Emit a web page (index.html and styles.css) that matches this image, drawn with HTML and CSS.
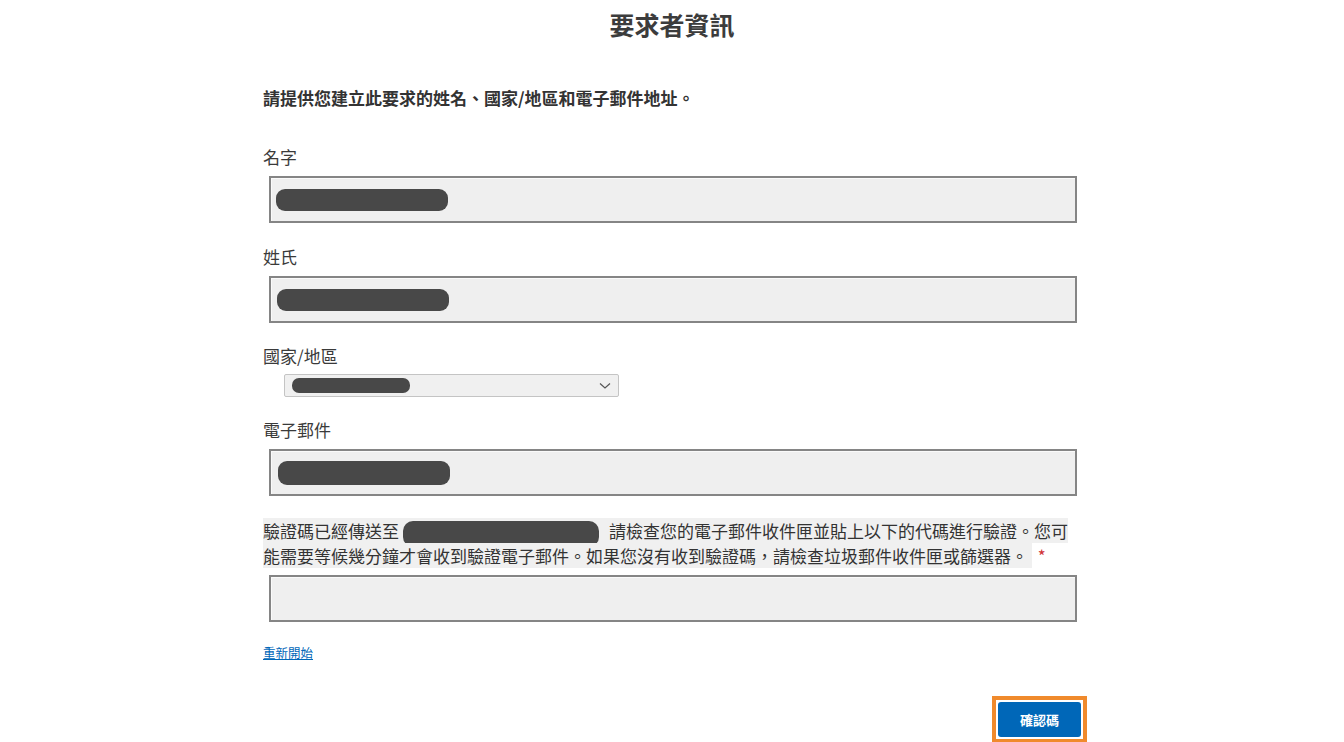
FILE: index.html
```html
<!DOCTYPE html>
<html lang="zh-Hant">
<head>
<meta charset="utf-8">
<title>要求者資訊</title>
<link rel="stylesheet" href="styles.css">
</head>
<body>
<main class="page">
  <h1 class="title">要求者資訊</h1>
  <p class="intro">請提供您建立此要求的姓名、國家/地區和電子郵件地址。</p>

  <div class="field">
    <div class="label">名字</div>
    <div class="textbox"><span class="redact redact-a"></span></div>
  </div>

  <div class="field">
    <div class="label">姓氏</div>
    <div class="textbox"><span class="redact redact-b"></span></div>
  </div>

  <div class="field field-select">
    <div class="label">國家/地區</div>
    <div class="select">
      <span class="redact redact-sel"></span>
      <svg class="chev" width="12" height="8" viewBox="0 0 12 8"><path d="M1 1.5 L6 6 L11 1.5" fill="none" stroke="#555" stroke-width="1.2"/></svg>
    </div>
  </div>

  <div class="field">
    <div class="label">電子郵件</div>
    <div class="textbox"><span class="redact redact-c"></span></div>
  </div>

  <div class="field field-code">
    <p class="notice"><span class="hl">驗證碼已經傳送至<span class="redact redact-mail"></span>請檢查您的電子郵件收件匣並貼上以下的代碼進行驗證。您可能需要等候幾分鐘才會收到驗證電子郵件。如果您沒有收到驗證碼，請檢查垃圾郵件收件匣或篩選器。 </span><span class="req">*</span></p>
    <div class="textbox"></div>
  </div>

  <a class="restart" href="#">重新開始</a>

  <div class="actions">
    <div class="btn-focus">
      <button class="btn" type="button">確認碼</button>
    </div>
  </div>
</main>
</body>
</html>
```

FILE: styles.css
```css
html, body {
  margin: 0;
  padding: 0;
  background: #ffffff;
}

body {
  font-family: "Noto Sans CJK TC", "Noto Sans", "Liberation Sans", sans-serif;
  color: #333333;
}

.page {
  width: 818px;
  margin: 0 auto;
  display: flex;
  flex-direction: column;
}

.title {
  margin: 8px 0 0;
  font-size: 25px;
  line-height: 32px;
  font-weight: 700;
  text-align: center;
  color: #3c3c3c;
}

.intro {
  margin: 46px 0 0;
  font-size: 17px;
  line-height: 24px;
  font-weight: 700;
  color: #333333;
}

.field {
  display: flex;
  flex-direction: column;
  margin-top: 22px;
}

.intro + .field {
  margin-top: 35px;
}

.label {
  font-size: 17px;
  line-height: 24px;
  color: #3a3a3a;
}

.textbox {
  box-sizing: border-box;
  margin: 7px 0 0 6px;
  width: 808px;
  height: 47px;
  background: #efefef;
  border: 2px solid #858585;
  box-shadow: inset 1px 1px 0 #fafafa;
  display: flex;
  align-items: center;
  padding-left: 5px;
}

.field-select {
  margin-top: 21px;
}

.field-select + .field {
  margin-top: 21px;
}

.select {
  box-sizing: border-box;
  margin: 6px 0 0 21px;
  width: 335px;
  height: 23px;
  background: #f0f0f0;
  border: 1px solid #c4c4c4;
  border-radius: 2px;
  display: flex;
  align-items: center;
  justify-content: space-between;
  padding: 0 7px 0 7px;
}

.chev {
  display: block;
}

.redact {
  display: inline-block;
  background: #484848;
}

.redact-a {
  width: 172px;
  height: 22px;
  border-radius: 9px;
}

.redact-b {
  width: 172px;
  height: 22px;
  border-radius: 9px;
  margin-left: 1px;
}

.redact-c {
  width: 172px;
  height: 24px;
  border-radius: 9px;
  margin-left: 2px;
}

.redact-sel {
  width: 118px;
  height: 15px;
  border-radius: 7px;
}

.field-code {
  margin-top: 23px;
}

.notice {
  margin: 0;
  font-size: 17px;
  line-height: 24px;
  color: #333333;
}

.hl {
  background: #f0f0f0;
}

.redact-mail {
  width: 196px;
  height: 26px;
  border-radius: 10px;
  vertical-align: -6px;
  margin: -3px 10px -3px 4px;
}

.req {
  color: #d13438;
  font-size: 17px;
  margin-left: 6px;
}

.restart {
  align-self: flex-start;
  margin-top: 22px;
  font-size: 12.5px;
  line-height: 18px;
  color: #0067b8;
  text-decoration: underline;
}

.actions {
  display: flex;
  justify-content: flex-end;
  margin-top: 34px;
}

.btn-focus {
  border: 4px solid #f08a2c;
  padding: 2px;
  margin-right: -6px;
  display: flex;
}

.btn {
  width: 83px;
  height: 35px;
  background: #0067b8;
  color: #ffffff;
  border: none;
  border-radius: 3px;
  font-family: "Noto Sans CJK TC", "Noto Sans", sans-serif;
  font-size: 13px;
  font-weight: 700;
  padding: 0;
}
```
